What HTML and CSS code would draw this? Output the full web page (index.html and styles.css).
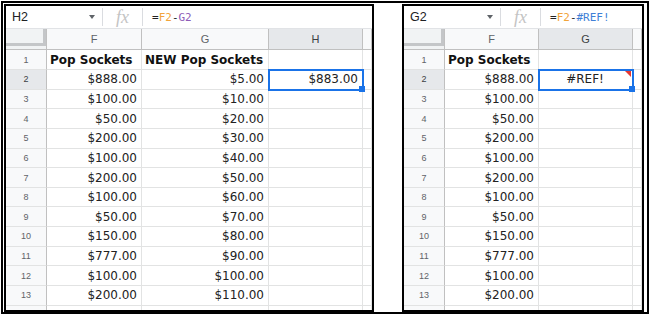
FILE: index.html
```html
<!DOCTYPE html>
<html lang="en">
<head>
    <meta charset="UTF-8">
    <meta name="viewport" content="width=device-width, initial-scale=1.0">
    <title>Sheets - #REF! error</title>
    <link rel="stylesheet" href="styles.css">
</head>
<body>
    <div class="frame">
        <!-- before: H2 subtracts G from F -->
        <div class="sheet sheet-left">
            <div class="formula-bar">
                <div class="name-box"><span>H2</span><span class="caret"></span></div>
                <span class="sep"></span>
                <div class="fx">fx</div>
                <span class="sep"></span>
                <div class="formula">=<span class="ref-orange">F2</span>-<span class="ref-purple">G2</span></div>
            </div>
            <div class="grid grid-left">
                <div class="corner"></div>
                <div class="col-head">F</div>
                <div class="col-head">G</div>
                <div class="col-head active">H</div>
                <div class="col-head"></div>

                <div class="row-head">1</div>
                <div class="cell text">Pop Sockets</div>
                <div class="cell text">NEW Pop Sockets</div>
                <div class="cell"></div>
                <div class="cell"></div>

                <div class="row-head active">2</div>
                <div class="cell">$888.00</div>
                <div class="cell">$5.00</div>
                <div class="cell selected">$883.00</div>
                <div class="cell"></div>

                <div class="row-head">3</div>
                <div class="cell">$100.00</div>
                <div class="cell">$10.00</div>
                <div class="cell"></div>
                <div class="cell"></div>

                <div class="row-head">4</div>
                <div class="cell">$50.00</div>
                <div class="cell">$20.00</div>
                <div class="cell"></div>
                <div class="cell"></div>

                <div class="row-head">5</div>
                <div class="cell">$200.00</div>
                <div class="cell">$30.00</div>
                <div class="cell"></div>
                <div class="cell"></div>

                <div class="row-head">6</div>
                <div class="cell">$100.00</div>
                <div class="cell">$40.00</div>
                <div class="cell"></div>
                <div class="cell"></div>

                <div class="row-head">7</div>
                <div class="cell">$200.00</div>
                <div class="cell">$50.00</div>
                <div class="cell"></div>
                <div class="cell"></div>

                <div class="row-head">8</div>
                <div class="cell">$100.00</div>
                <div class="cell">$60.00</div>
                <div class="cell"></div>
                <div class="cell"></div>

                <div class="row-head">9</div>
                <div class="cell">$50.00</div>
                <div class="cell">$70.00</div>
                <div class="cell"></div>
                <div class="cell"></div>

                <div class="row-head">10</div>
                <div class="cell">$150.00</div>
                <div class="cell">$80.00</div>
                <div class="cell"></div>
                <div class="cell"></div>

                <div class="row-head">11</div>
                <div class="cell">$777.00</div>
                <div class="cell">$90.00</div>
                <div class="cell"></div>
                <div class="cell"></div>

                <div class="row-head">12</div>
                <div class="cell">$100.00</div>
                <div class="cell">$100.00</div>
                <div class="cell"></div>
                <div class="cell"></div>

                <div class="row-head">13</div>
                <div class="cell">$200.00</div>
                <div class="cell">$110.00</div>
                <div class="cell"></div>
                <div class="cell"></div>

                <div class="row-head">14</div>
                <div class="cell"></div>
                <div class="cell"></div>
                <div class="cell"></div>
                <div class="cell"></div>
            </div>
        </div>

        <!-- after: column G deleted, reference breaks -->
        <div class="sheet sheet-right">
            <div class="formula-bar">
                <div class="name-box"><span>G2</span><span class="caret"></span></div>
                <span class="sep"></span>
                <div class="fx">fx</div>
                <span class="sep"></span>
                <div class="formula">=<span class="ref-orange">F2</span>-<span class="ref-blue">#REF!</span></div>
            </div>
            <div class="grid grid-right">
                <div class="corner"></div>
                <div class="col-head">F</div>
                <div class="col-head active">G</div>
                <div class="col-head"></div>

                <div class="row-head">1</div>
                <div class="cell text">Pop Sockets</div>
                <div class="cell"></div>
                <div class="cell"></div>

                <div class="row-head active">2</div>
                <div class="cell">$888.00</div>
                <div class="cell selected error">#REF!</div>
                <div class="cell"></div>

                <div class="row-head">3</div>
                <div class="cell">$100.00</div>
                <div class="cell"></div>
                <div class="cell"></div>

                <div class="row-head">4</div>
                <div class="cell">$50.00</div>
                <div class="cell"></div>
                <div class="cell"></div>

                <div class="row-head">5</div>
                <div class="cell">$200.00</div>
                <div class="cell"></div>
                <div class="cell"></div>

                <div class="row-head">6</div>
                <div class="cell">$100.00</div>
                <div class="cell"></div>
                <div class="cell"></div>

                <div class="row-head">7</div>
                <div class="cell">$200.00</div>
                <div class="cell"></div>
                <div class="cell"></div>

                <div class="row-head">8</div>
                <div class="cell">$100.00</div>
                <div class="cell"></div>
                <div class="cell"></div>

                <div class="row-head">9</div>
                <div class="cell">$50.00</div>
                <div class="cell"></div>
                <div class="cell"></div>

                <div class="row-head">10</div>
                <div class="cell">$150.00</div>
                <div class="cell"></div>
                <div class="cell"></div>

                <div class="row-head">11</div>
                <div class="cell">$777.00</div>
                <div class="cell"></div>
                <div class="cell"></div>

                <div class="row-head">12</div>
                <div class="cell">$100.00</div>
                <div class="cell"></div>
                <div class="cell"></div>

                <div class="row-head">13</div>
                <div class="cell">$200.00</div>
                <div class="cell"></div>
                <div class="cell"></div>

                <div class="row-head">14</div>
                <div class="cell"></div>
                <div class="cell"></div>
                <div class="cell"></div>
            </div>
        </div>
    </div>
</body>
</html>
```

FILE: styles.css
```css
* {
    box-sizing: border-box;
}

body {
    margin: 0;
    background: #fff;
    font-family: 'DejaVu Sans', sans-serif;
    color: #222;
}

.frame {
    margin: 1px;
    width: 648px;
    height: 313px;
    border: 2px solid #000;
    padding: 1px 3px 0 1px;
    display: flex;
    gap: 28px;
}

.sheet {
    height: 308px;
    border: 2px solid #000;
    overflow: hidden;
    display: flex;
    flex-direction: column;
    background: #fff;
}

.sheet-left {
    width: 370px;
}

.sheet-right {
    width: 242px;
}

/* formula bar */
.formula-bar {
    height: 23px;
    flex: none;
    display: flex;
    align-items: center;
    border-bottom: 1px solid #e1e3e6;
}

.name-box {
    width: 96px;
    padding: 0 7px 0 6px;
    display: flex;
    align-items: center;
    justify-content: space-between;
    font-family: 'Liberation Sans', Arial, sans-serif;
    font-size: 12.5px;
    color: #202124;
}

.caret {
    width: 0;
    height: 0;
    border-left: 3.5px solid transparent;
    border-right: 3.5px solid transparent;
    border-top: 4px solid #5f6368;
}

.sep {
    width: 1px;
    height: 18px;
    background: #dadce0;
}

.fx {
    width: 39px;
    text-align: center;
    font-family: 'Liberation Serif', serif;
    font-style: italic;
    font-size: 18px;
    line-height: 18px;
    color: #c4c4c4;
}

.formula {
    padding-left: 9px;
    font-family: 'DejaVu Sans Mono', monospace;
    font-size: 11px;
    color: #222;
}

.ref-orange {
    color: #f2a43a;
}

.ref-purple {
    color: #8e5cb8;
}

.ref-blue {
    color: #3f7fd6;
}

/* grid */
.grid {
    display: grid;
    grid-template-rows: 21px 20px repeat(13, 19.65px);
}

.grid-left {
    grid-template-columns: 41px 95px 127px 94px 9px;
}

.grid-right {
    grid-template-columns: 41px 94px 94px 9px;
}

.corner {
    background:
        linear-gradient(#c4c6c8, #c4c6c8) 37px 0 / 3px 17px no-repeat,
        linear-gradient(#c4c6c8, #c4c6c8) 0 14px / 40px 3px no-repeat,
        #f1f3f4;
    border-right: 1px solid #c0c0c0;
    border-bottom: 1px solid #c0c0c0;
}

.col-head {
    display: flex;
    align-items: center;
    justify-content: center;
    background: #f8f9fa;
    border-right: 1px solid #c0c0c0;
    border-bottom: 1px solid #c0c0c0;
    font-family: 'Liberation Sans', Arial, sans-serif;
    font-size: 11px;
    color: #5f6368;
}

.row-head {
    display: flex;
    align-items: center;
    justify-content: center;
    background: #f8f9fa;
    border-right: 1px solid #c0c0c0;
    border-bottom: 1px solid #e2e3e3;
    font-family: 'Liberation Sans', Arial, sans-serif;
    font-size: 9px;
    color: #5f6368;
    overflow: hidden;
}

.col-head.active,
.row-head.active {
    background: #e6e8eb;
    color: #3c4043;
}

.cell {
    display: flex;
    align-items: center;
    justify-content: flex-end;
    padding: 0 4px 0 3px;
    border-right: 1px solid #e2e3e3;
    border-bottom: 1px solid #e2e3e3;
    font-size: 12px;
    white-space: nowrap;
    overflow: hidden;
}

.cell.text {
    justify-content: flex-start;
    font-weight: bold;
    color: #111;
}

.cell.selected {
    position: relative;
    z-index: 2;
    overflow: visible;
    outline: 2px solid #1a73e8;
    outline-offset: -1px;
}

.cell.selected:after {
    content: '';
    position: absolute;
    right: -3px;
    bottom: -3px;
    width: 6px;
    height: 6px;
    background: #1a73e8;
}

.cell.error {
    justify-content: center;
}

.cell.error:before {
    content: '';
    position: absolute;
    top: 1px;
    right: 1px;
    border-top: 6px solid #e53935;
    border-left: 6px solid transparent;
}
```
